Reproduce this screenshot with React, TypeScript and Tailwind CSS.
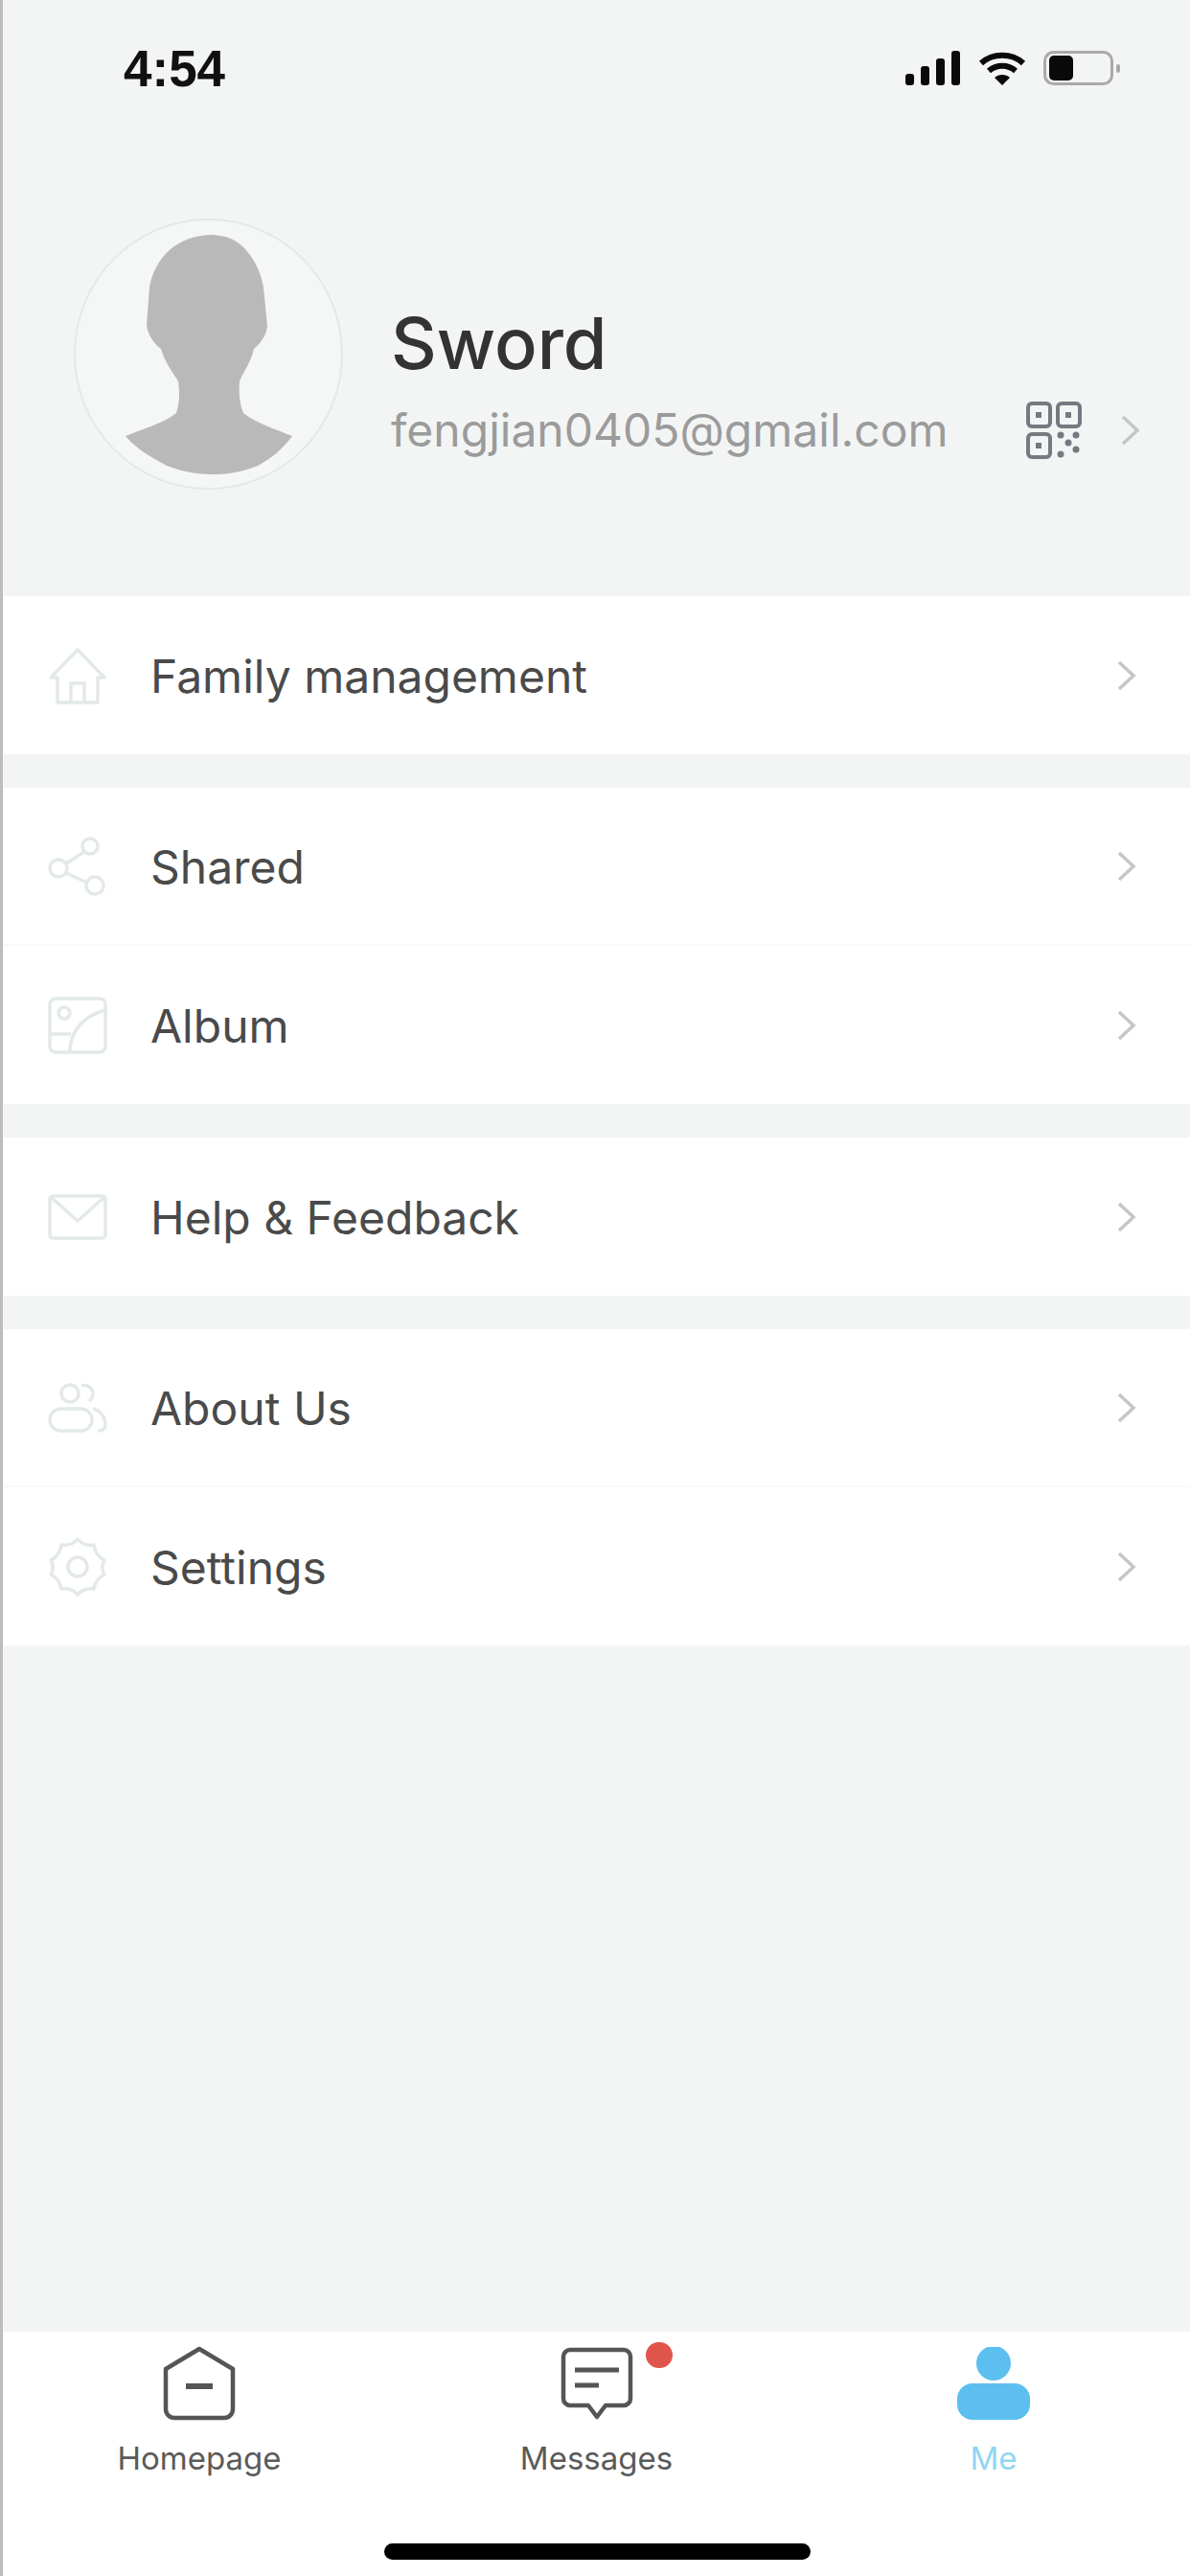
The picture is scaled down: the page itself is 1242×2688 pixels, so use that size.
import React from "react";

const sans = "font-['Inter','Liberation_Sans',sans-serif]";

const Chevron = () => (
  <svg width="20" height="32" viewBox="0 0 20 32" fill="none" stroke="#c4c7c7" strokeWidth="3.5">
    <path d="M2 2l15 14L2 30" />
  </svg>
);

const HouseIcon = () => (
  <svg width="64" height="60" viewBox="0 0 64 60" fill="none" stroke="#e3e9e9" strokeWidth="3.5" strokeLinejoin="round">
    <path d="M4 32L32 3l28 29h-7v26H11V32z" />
    <path d="M25 58V38h14v20" />
  </svg>
);

const ShareIcon = () => (
  <svg width="64" height="62" viewBox="0 0 64 62" fill="none" stroke="#e3e9e9" strokeWidth="3.5">
    <circle cx="45" cy="10" r="8" />
    <circle cx="12" cy="33" r="9" />
    <circle cx="50" cy="51" r="9" />
    <path d="M39 16L20 28M20 38l22 10" />
  </svg>
);

const AlbumIcon = () => (
  <svg width="64" height="62" viewBox="0 0 64 62" fill="none" stroke="#e3e9e9" strokeWidth="3.5">
    <rect x="3" y="3" width="58" height="56" rx="6" />
    <circle cx="18" cy="18" r="6" />
    <path d="M24 59c0-22 14-38 37-44M3 40h22" />
  </svg>
);

const MailIcon = () => (
  <svg width="64" height="50" viewBox="0 0 64 50" fill="none" stroke="#e3e9e9" strokeWidth="3.5">
    <rect x="3" y="3" width="58" height="44" rx="3" />
    <path d="M4 4l28 25L60 4" />
  </svg>
);

const PeopleIcon = () => (
  <svg width="64" height="54" viewBox="0 0 64 54" fill="none" stroke="#e3e9e9" strokeWidth="3.5">
    <circle cx="24" cy="12" r="9" />
    <path d="M36 4a9 9 0 0 1 8 16" />
    <rect x="3" y="28" width="44" height="23" rx="11.5" />
    <path d="M48 28c8 2 13 9 13 16 0 5-3 7-8 7" />
  </svg>
);

const GearIcon = () => (
  <svg width="64" height="64" viewBox="0 0 64 64" fill="none" stroke="#e3e9e9" strokeWidth="3.5" strokeLinejoin="round">
    <path d="M32 3c4 5 9 7 17 6 1 7 5 13 11 16-3 5-3 10 0 15-6 3-10 8-11 15-8-1-13 1-17 6-4-5-9-7-17-6-1-7-5-12-11-15 3-5 3-10 0-15 6-3 10-9 11-16 8 1 13-1 17-6z" />
    <circle cx="32" cy="32" r="10" />
  </svg>
);

const MenuRow = ({ icon, label, divider }: { icon: React.ReactNode; label: string; divider?: boolean }) => (
  <div className={`flex h-[165px] items-center bg-white pl-[46px] pr-[56px] ${divider ? "border-b-2 border-[#f8f9f9]" : ""}`}>
    <div className="flex w-[108px] shrink-0 items-center">{icon}</div>
    <span className={`flex-1 pt-[2px] text-[48px] leading-none text-[#4a4a4a] ${sans}`}>{label}</span>
    <Chevron />
  </div>
);

const TabItem = ({ icon, label, active }: { icon: React.ReactNode; label: string; active?: boolean }) => (
  <div className="flex flex-col items-center">
    <div className="relative flex h-[78px] items-center justify-center">{icon}</div>
    <span className={`mt-[21px] text-[33px] leading-[36px] ${sans} ${active ? "text-[#8fd6f2]" : "text-[#5a5a5a]"}`}>{label}</span>
  </div>
);

export default function App() {
  return (
    <div className="flex h-[2688px] w-[1242px] flex-col overflow-hidden border-l-[3px] border-[#bdbdbd] bg-[#f3f5f5]">
      {/* status bar */}
      <div className="flex h-[142px] shrink-0 items-center justify-between pl-[126px] pr-[72px]">
        <span className="font-['Liberation_Sans',sans-serif] text-[53px] font-bold leading-none text-[#111]">4:54</span>
        <div className="flex items-center">
          <svg width="58" height="36" viewBox="0 0 58 36" fill="#0a0a0a">
            <rect x="0" y="24" width="9" height="12" rx="3" />
            <rect x="16" y="16" width="9" height="20" rx="3" />
            <rect x="32" y="8" width="9" height="28" rx="3" />
            <rect x="48" y="0" width="9" height="36" rx="3" />
          </svg>
          <svg className="ml-[18px]" width="50" height="36" viewBox="0 0 50 36" fill="none" stroke="#0a0a0a" strokeWidth="6">
            <path d="M3 13c12-11 32-11 44 0" />
            <path d="M11 21c8-7 20-7 28 0" />
            <path d="M25 36l-8-8c4-4 12-4 16 0z" fill="#0a0a0a" stroke="none" />
          </svg>
          <svg className="ml-[18px]" width="81" height="36" viewBox="0 0 81 36" fill="none">
            <rect x="1.5" y="1.5" width="70" height="33" rx="9" stroke="#a9a9a9" strokeWidth="3" />
            <rect x="6" y="5" width="25" height="26" rx="5" fill="#0a0a0a" />
            <rect x="76" y="14" width="4" height="9" rx="2" fill="#a9a9a9" />
          </svg>
        </div>
      </div>

      {/* profile */}
      <div className="flex h-[480px] shrink-0 items-start pl-[74px] pr-[53px] pt-[86px]">
        <svg width="281" height="283" viewBox="77 228 281 283" className="shrink-0">
          <ellipse cx="217.5" cy="369.5" rx="139.5" ry="140.5" fill="#f5f6f6" stroke="#e6e8e8" strokeWidth="2" />
          <path
            d="M222 245C236 246 246 250 254 258C264 268 272 282 275 300L279 340C278 350 272 358 265 364C262 378 254 388 250 398C249 410 250 422 254 431C268 442 288 448 305 455C294 470 283 478 269 486C254 492 238 495 222 495C205 495 190 492 174 486C156 476 142 468 131 455C148 448 170 442 184 431C187 422 188 410 186 398C180 388 172 378 168 364C160 358 155 350 153 340L156 300C158 286 166 270 178 260C190 250 206 245 222 245Z"
            fill="#b9b9b9"
          />
        </svg>
        <div className="ml-[50px] flex flex-1 flex-col pt-[90px]">
          <span className={`text-[74px] font-medium leading-[80px] text-[#333] ${sans}`}>Sword</span>
          <div className="mt-[21px] flex items-center">
            <span className={`flex-1 text-[48px] leading-[60px] text-[#9b9b9b] ${sans}`}>fengjian0405@gmail.com</span>
            <svg width="58" height="60" viewBox="0 0 58 60" fill="none" stroke="#737a80" strokeWidth="4">
              <rect x="2" y="2" width="23" height="24" rx="4" />
              <rect x="33" y="2" width="23" height="24" rx="4" />
              <rect x="2" y="34" width="23" height="24" rx="4" />
              <g fill="#737a80" stroke="none">
                <rect x="10" y="11" width="6" height="6" />
                <rect x="41" y="11" width="6" height="6" />
                <rect x="10" y="43" width="6" height="6" />
                <circle cx="36" cy="35" r="3.5" />
                <circle cx="52" cy="35" r="3.5" />
                <circle cx="44" cy="43" r="3.5" />
                <circle cx="36" cy="55" r="3.5" />
                <circle cx="52" cy="50" r="3.5" />
              </g>
            </svg>
            <div className="ml-[41px] mr-[-1px]">
              <Chevron />
            </div>
          </div>
        </div>
      </div>

      {/* menu groups */}
      <div className="flex flex-col gap-[35px]">
        <MenuRow icon={<HouseIcon />} label="Family management" />
        <div className="flex flex-col">
          <MenuRow icon={<ShareIcon />} label="Shared" divider />
          <MenuRow icon={<AlbumIcon />} label="Album" />
        </div>
        <MenuRow icon={<MailIcon />} label="Help & Feedback" />
        <div className="flex flex-col">
          <MenuRow icon={<PeopleIcon />} label="About Us" divider />
          <MenuRow icon={<GearIcon />} label="Settings" />
        </div>
      </div>

      <div className="flex-1" />

      {/* tab bar */}
      <div className="relative h-[255px] shrink-0 bg-white pt-[15px]">
        <div className="grid grid-cols-3">
          <div className="pr-[3px]">
            <TabItem
              label="Homepage"
              icon={
                <svg width="76" height="78" viewBox="0 0 76 78" fill="none" stroke="#555" strokeWidth="4.5" strokeLinejoin="round">
                  <path d="M38 3L73 24V66a9 9 0 0 1-9 9H12a9 9 0 0 1-9-9V24z" />
                  <path d="M24 42h28" strokeWidth="6" />
                </svg>
              }
            />
          </div>
          <TabItem
            label="Messages"
            icon={
              <>
                <svg width="76" height="76" viewBox="0 0 76 76" fill="none" stroke="#555" strokeWidth="4.5" strokeLinejoin="round">
                  <path d="M10 3h56a7 7 0 0 1 7 7v44a7 7 0 0 1-7 7H47l-9 12-9-12H10a7 7 0 0 1-7-7V10a7 7 0 0 1 7-7z" />
                  <path d="M15 24h46" strokeWidth="5" />
                  <path d="M15 40h25" strokeWidth="5" />
                </svg>
                <span className="absolute left-[89px] top-[-4px] h-[27px] w-[28px] rounded-full bg-[#e0554b]" />
              </>
            }
          />
          <div className="pl-[3px]">
            <TabItem
              label="Me"
              active
              icon={
                <svg width="76" height="76" viewBox="0 0 76 76" fill="#5cbff0">
                  <circle cx="38" cy="17" r="18" />
                  <rect x="0" y="38" width="76" height="38" rx="16" />
                </svg>
              }
            />
          </div>
        </div>
        <div className="absolute bottom-[17px] left-[398px] h-[17px] w-[445px] rounded-full bg-black" />
      </div>
    </div>
  );
}
